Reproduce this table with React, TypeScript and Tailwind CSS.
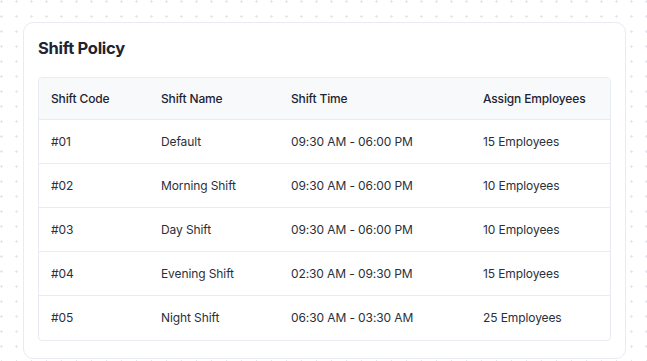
import React from "react";

const rows = [
  ["#01", "Default", "09:30 AM - 06:00 PM", "15 Employees"],
  ["#02", "Morning Shift", "09:30 AM - 06:00 PM", "10 Employees"],
  ["#03", "Day Shift", "09:30 AM - 06:00 PM", "10 Employees"],
  ["#04", "Evening Shift", "02:30 AM - 09:30 PM", "15 Employees"],
  ["#05", "Night Shift", "06:30 AM - 03:30 AM", "25 Employees"],
];

const cols = "grid grid-cols-[111px_130px_191px_1fr]";

export default function App() {
  return (
    <div
      className="w-[647px] h-[361px] bg-white overflow-hidden pt-[22px] pl-[23px]"
      style={{
        fontFamily: "Inter, 'Noto Sans', sans-serif",
        backgroundImage: "radial-gradient(circle, #e3e6eb 1.1px, transparent 1.4px)",
        backgroundSize: "15px 15px",
        backgroundPosition: "-6px -6px",
      }}
    >
      <div className="w-[603px] h-[337px] bg-white border border-[#e8ebf1] rounded-[10px] pt-[14px] px-[14px]">
        <h1 className="text-[16.5px] font-bold text-[#1f2433] leading-[22px] tracking-[-0.3px]">
          Shift Policy
        </h1>
        <div className="mt-[18px] border border-[#e8ebf1] rounded-[4px] overflow-hidden">
          <div className={`${cols} h-[42px] items-center bg-[#f8f9fb] border-b border-[#e8ebf1] text-[12px] font-medium text-[#1f2433] tracking-[-0.15px]`}>
            <div className="pl-[12px]">Shift Code</div>
            <div className="pl-[11px]">Shift Name</div>
            <div className="pl-[11px]">Shift Time</div>
            <div className="pl-[12px]">Assign Employees</div>
          </div>
          {rows.map((r, i) => (
            <div
              key={i}
              className={`${cols} h-[44px] items-center text-[12px] text-[#2b2f3a] tracking-[-0.1px] ${i < rows.length - 1 ? "border-b border-[#e8ebf1]" : ""}`}
            >
              <div className="pl-[12px]">{r[0]}</div>
              <div className="pl-[11px]">{r[1]}</div>
              <div className="pl-[11px]">{r[2]}</div>
              <div className="pl-[12px]">{r[3]}</div>
            </div>
          ))}
        </div>
      </div>
    </div>
  );
}
